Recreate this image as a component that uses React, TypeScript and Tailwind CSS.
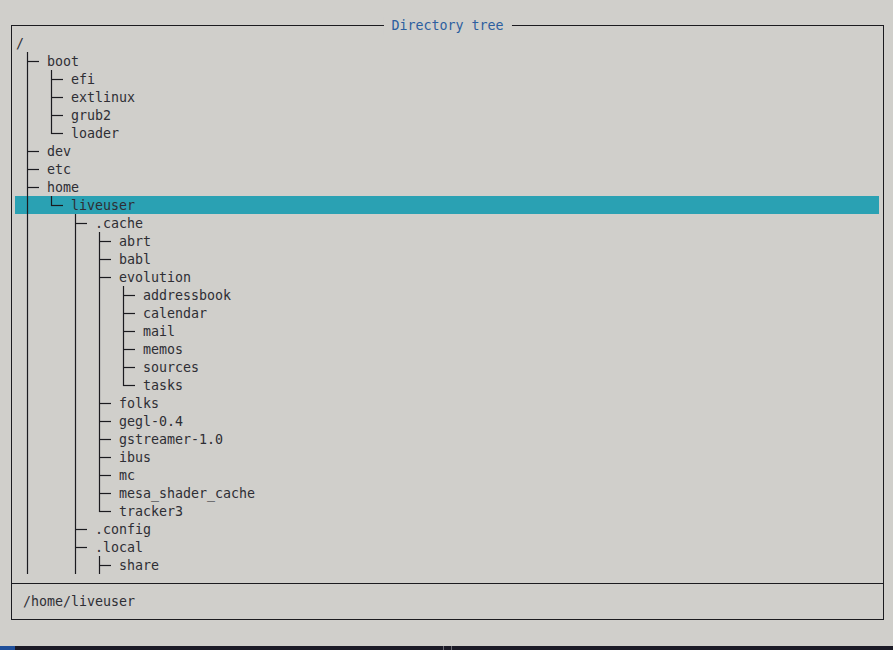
import React from 'react';

type Node = { name: string; last?: boolean; children?: Node[] };

const tree: Node[] = [
  {
    name: 'boot',
    children: [{ name: 'efi' }, { name: 'extlinux' }, { name: 'grub2' }, { name: 'loader', last: true }],
  },
  { name: 'dev' },
  { name: 'etc' },
  {
    name: 'home',
    children: [
      {
        name: 'liveuser',
        last: true,
        children: [
          {
            name: '.cache',
            children: [
              { name: 'abrt' },
              { name: 'babl' },
              {
                name: 'evolution',
                children: [
                  { name: 'addressbook' },
                  { name: 'calendar' },
                  { name: 'mail' },
                  { name: 'memos' },
                  { name: 'sources' },
                  { name: 'tasks', last: true },
                ],
              },
              { name: 'folks' },
              { name: 'gegl-0.4' },
              { name: 'gstreamer-1.0' },
              { name: 'ibus' },
              { name: 'mc' },
              { name: 'mesa_shader_cache' },
              { name: 'tracker3', last: true },
            ],
          },
          { name: '.config' },
          { name: '.local', children: [{ name: 'share' }] },
        ],
      },
    ],
  },
];

type Guide = 'pipe' | 'tee' | 'corner' | 'blank';
type Row = { name: string; guides: Guide[] };

function flatten(nodes: Node[], parents: boolean[], out: Row[]) {
  nodes.forEach((n) => {
    const guides: Guide[] = parents.map((last) => (last ? 'blank' : 'pipe'));
    guides.push(n.last ? 'corner' : 'tee');
    out.push({ name: n.name, guides });
    if (n.children) flatten(n.children, [...parents, !!n.last], out);
  });
  return out;
}

const rows = flatten(tree, [], []);

function GuideCell({ kind }: { kind: Guide }) {
  return (
    <svg width="24" height="18" className="shrink-0 block" viewBox="0 0 24 18">
      {kind === 'pipe' && <line x1="4.5" y1="0" x2="4.5" y2="18" stroke="#1b1b1f" strokeWidth="1.2" />}
      {kind === 'tee' && (
        <>
          <line x1="4.5" y1="0" x2="4.5" y2="18" stroke="#1b1b1f" strokeWidth="1.2" />
          <line x1="4" y1="9.5" x2="16" y2="9.5" stroke="#1b1b1f" strokeWidth="1.2" />
        </>
      )}
      {kind === 'corner' && (
        <>
          <line x1="4.5" y1="0" x2="4.5" y2="10" stroke="#1b1b1f" strokeWidth="1.2" />
          <line x1="4" y1="9.5" x2="16" y2="9.5" stroke="#1b1b1f" strokeWidth="1.2" />
        </>
      )}
    </svg>
  );
}

export default function App() {
  return (
    <div
      className="w-[893px] h-[650px] bg-[#d0cfcb] text-[#2e2e34] flex flex-col overflow-hidden"
      style={{ fontFamily: '"DejaVu Sans Mono", monospace' }}
    >
      <div className="h-[25px] shrink-0" />
      {/* Frame */}
      <div className="relative ml-[11px] w-[873px] h-[595px] border border-[#1b1b1f] flex flex-col text-[13.3px] leading-[18px]">
        <div className="absolute left-1/2 -translate-x-1/2 -top-[9px] h-[18px] px-[8px] bg-[#d0cfcb] text-[#2c5e9f] whitespace-pre">
          Directory tree
        </div>

        {/* Tree */}
        <div className="h-[557px] pt-[8px] pl-[3px] pr-[4px] overflow-hidden">
          <div className="h-[18px] pl-[1px] pt-px">/</div>
          {rows.map((r, i) => (
            <div
              key={i}
              className={`h-[18px] flex items-start pl-[8px] ${r.name === 'liveuser' ? 'bg-[#2aa1b3]' : ''}`}
            >
              {r.guides.map((g, j) => (
                <GuideCell key={j} kind={g} />
              ))}
              <span className="whitespace-pre mt-px">{r.name}</span>
            </div>
          ))}
        </div>

        {/* Footer */}
        <div className="border-t border-[#1b1b1f] flex-1 pt-[9px] pl-[11px]">
          <div className="h-[18px]">/home/liveuser</div>
        </div>
      </div>
      <div className="flex-1" />
      {/* Bottom strip */}
      <div className="h-[4px] shrink-0 flex bg-[#1b1a26]">
        <div className="w-[15px] bg-[#1f4f9a]" />
        <div className="w-[428px]" />
        <div className="w-px bg-[#6b6a72]" />
        <div className="w-[7px]" />
        <div className="w-px bg-[#6b6a72]" />
      </div>
    </div>
  );
}
